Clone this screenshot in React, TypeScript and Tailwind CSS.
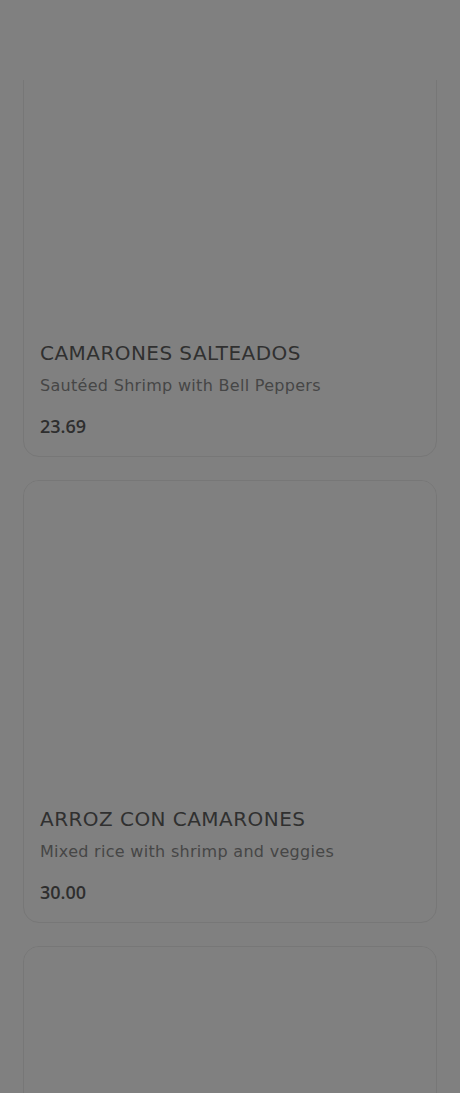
import React from "react";

type Dish = {
  name: string;
  description: string;
  price: string;
};

const dishes: Dish[] = [
  { name: "CAMARONES SALTEADOS", description: "Sautéed Shrimp with Bell Peppers", price: "23.69" },
  { name: "ARROZ CON CAMARONES", description: "Mixed rice with shrimp and veggies", price: "30.00" },
];

const DishCard: React.FC<{ dish?: Dish }> = ({ dish }) => {
  return (
    <div className="rounded-2xl border border-[#777777] bg-[#808080] overflow-hidden">
      <div className="h-[308px] w-full bg-[#808080]" />
      {dish ? (
        <div className="p-4">
          <h3 className="font-['DejaVu_Sans',sans-serif] text-[20px] leading-[28px] tracking-[0.45px] text-[#303030]">
            {dish.name}
          </h3>
          <p className="mt-[7px] font-['DejaVu_Sans',sans-serif] text-[16px] leading-[24px] tracking-[0.3px] text-[#464646]">
            {dish.description}
          </p>
          <p className="mt-[14px] font-['Open_Sans',sans-serif] text-[18px] leading-[28px] font-semibold text-[#2e2e2e]">
            {dish.price}
          </p>
        </div>
      ) : (
        <div className="h-[118px]" />
      )}
    </div>
  );
};

const App: React.FC = () => {
  return (
    <div className="h-screen overflow-hidden bg-[#808080] flex flex-col">
      <header className="h-20 shrink-0 bg-[#808080] relative z-10" />
      <main className="flex-1 overflow-hidden">
        <div className="-mt-[66px] px-[23px] flex flex-col gap-[23px]">
          {dishes.map((dish) => (
            <DishCard key={dish.name} dish={dish} />
          ))}
          <DishCard />
        </div>
      </main>
    </div>
  );
};

export default App;
